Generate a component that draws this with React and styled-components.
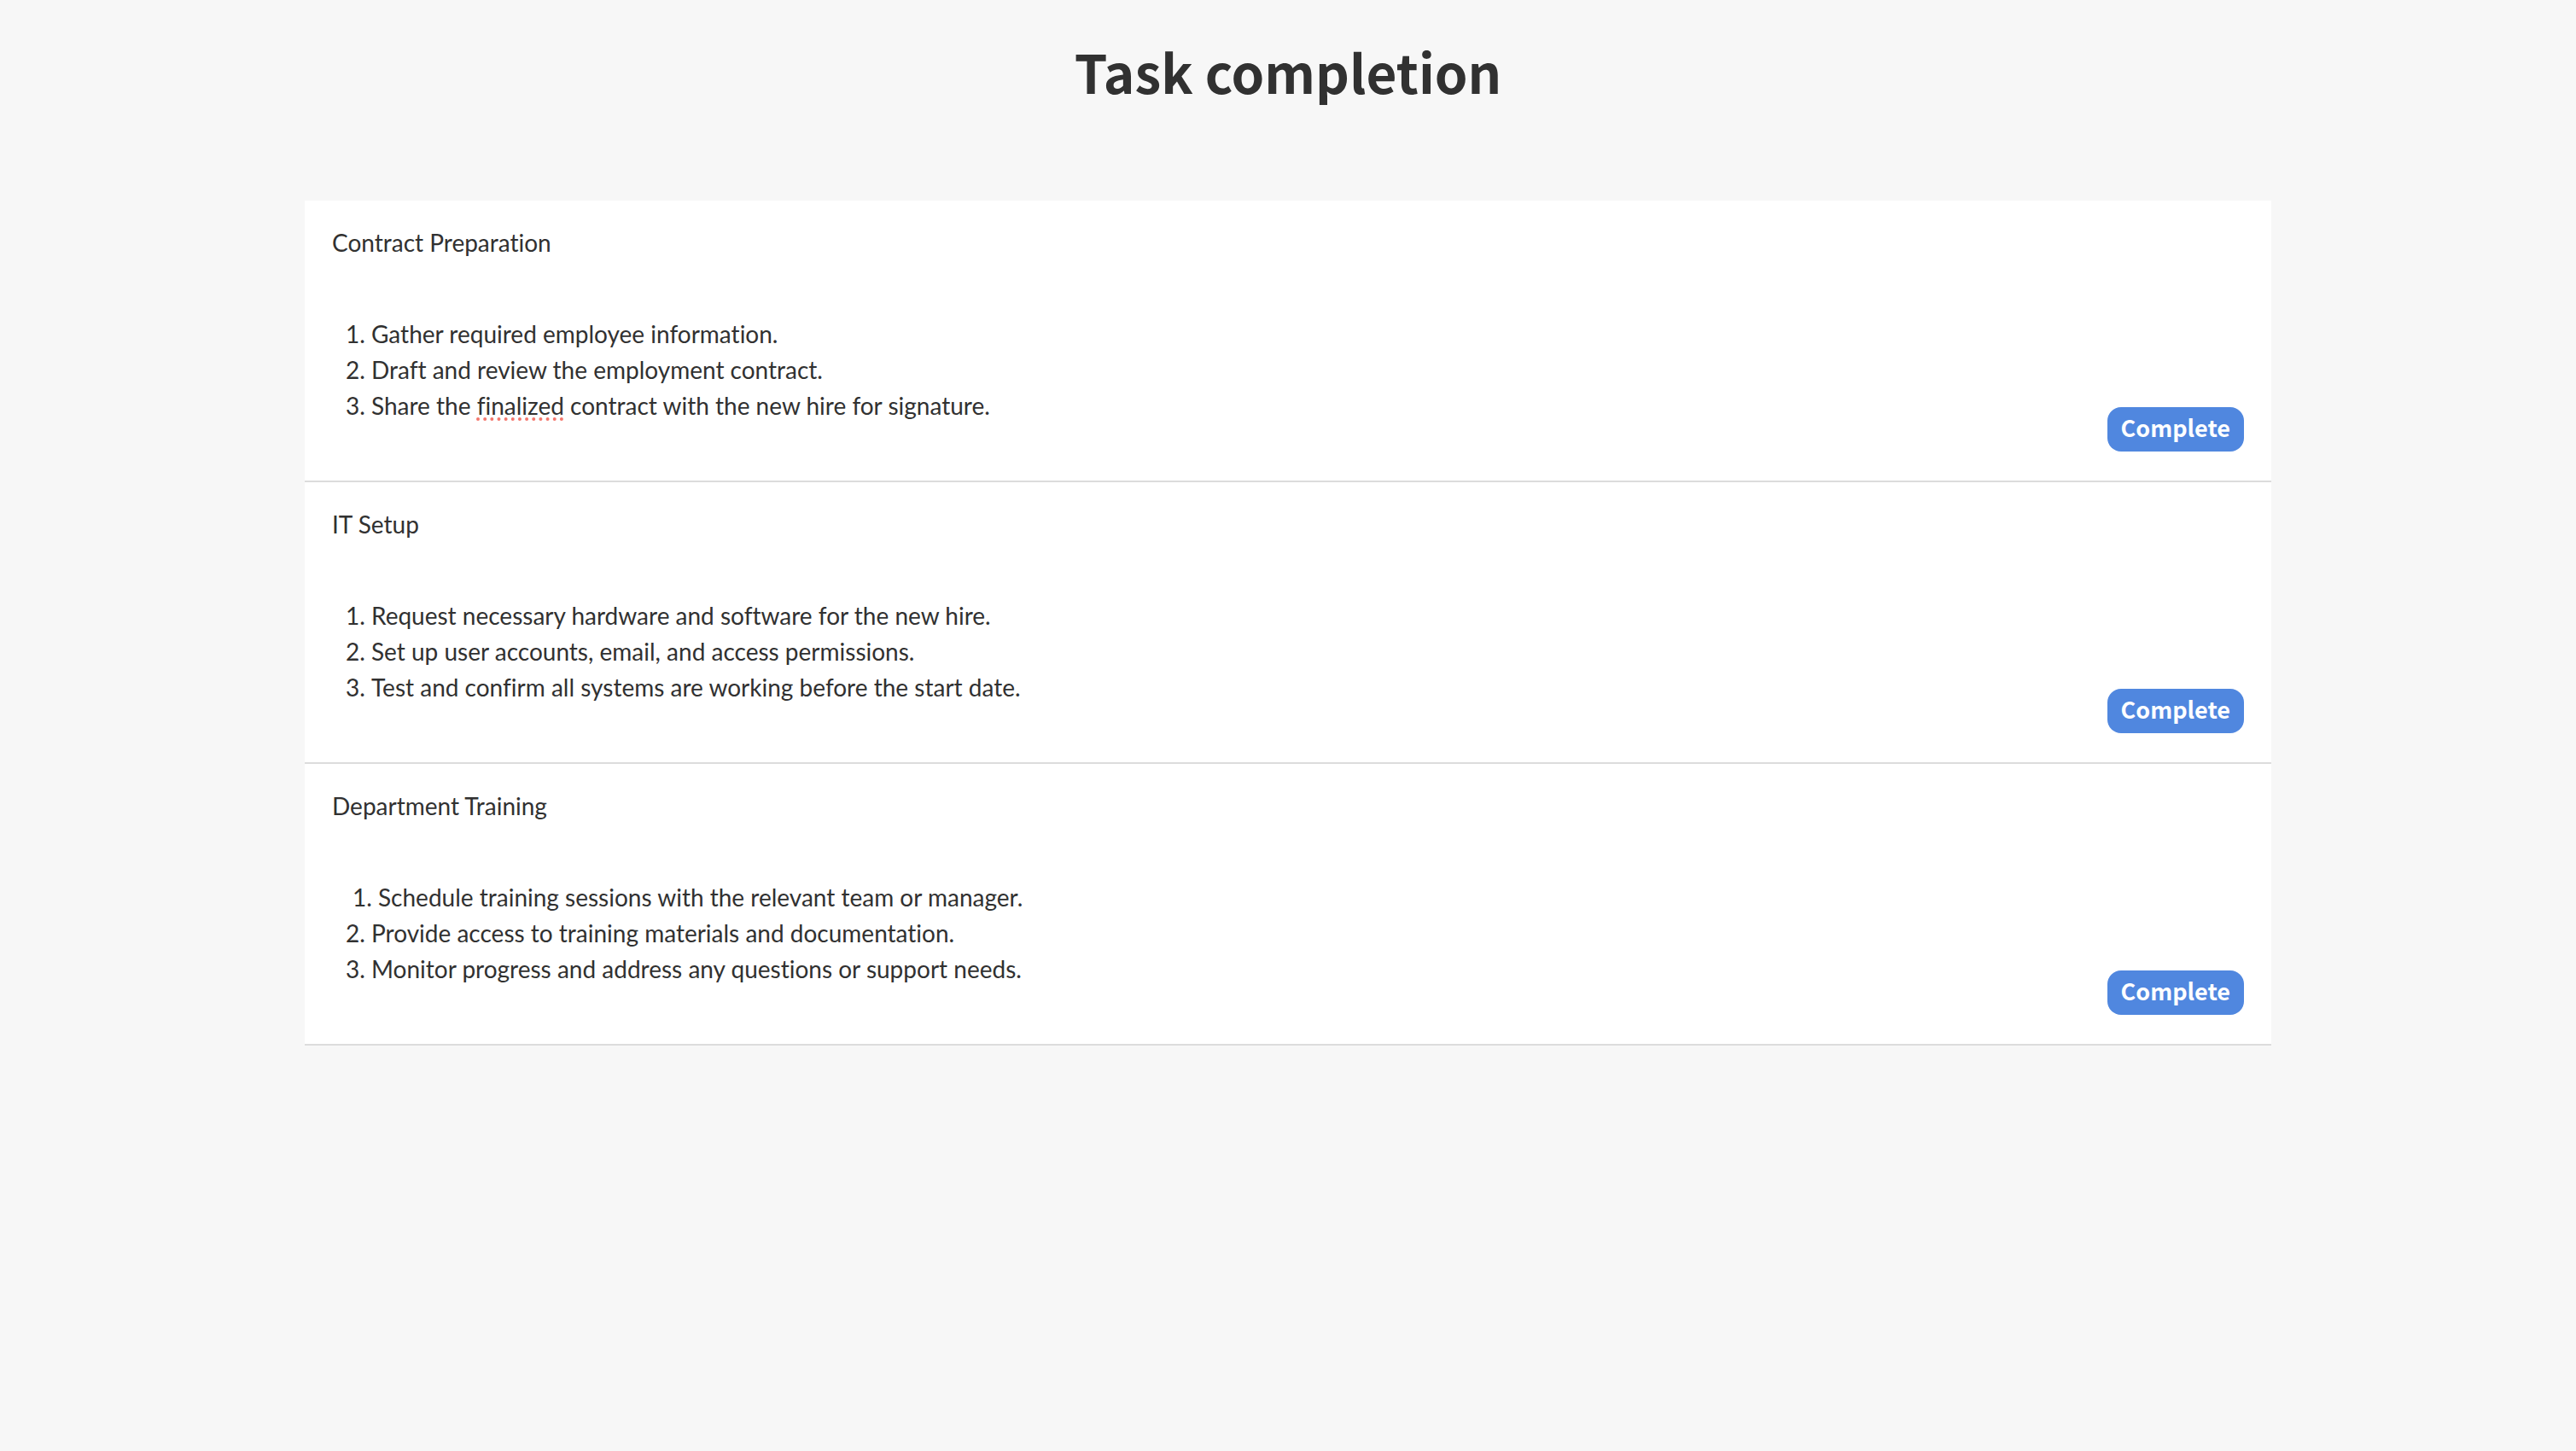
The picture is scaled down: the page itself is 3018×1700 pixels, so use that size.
import React from 'react';
import styled, { createGlobalStyle } from 'styled-components';

const displayFont = "'Noto Sans CJK SC', 'Open Sans', sans-serif";

const GlobalStyle = createGlobalStyle`
  *, *::before, *::after {
    box-sizing: border-box;
  }

  body {
    margin: 0;
    min-height: 100vh;
    background: #f7f7f7;
    color: #313131;
    font-family: Lato, 'Open Sans', sans-serif;
    font-size: 28px;
    line-height: 42px;
    font-variant-ligatures: none;
  }
`;

const Page = styled.main`
  display: flex;
  flex-direction: column;
  align-items: center;
  gap: 114px;
  padding: 45px 32px;
`;

const PageTitle = styled.h1`
  margin: 0;
  font-family: ${displayFont};
  font-size: 62px;
  font-weight: 700;
  line-height: 76px;
  text-align: center;
`;

const TaskList = styled.div`
  width: 100%;
  max-width: 2304px;
`;

const TaskCard = styled.section`
  display: flex;
  align-items: flex-end;
  justify-content: space-between;
  gap: 32px;
  padding: 28px 32px 34px;
  background: #ffffff;
  border-bottom: 2px solid #dcdcdc;
`;

const TaskBody = styled.div`
  display: flex;
  flex-direction: column;
  gap: 65px;
  padding-bottom: 33px;
`;

const TaskTitle = styled.h2`
  margin: 0;
  font-size: 28px;
  font-weight: 400;
  line-height: 42px;
`;

const Steps = styled.ol`
  margin: 0;
  padding: 0 0 0 16px;
  list-style: none;
`;

const Step = styled.li`
  display: flex;
  padding-left: ${({ $indented }) => ($indented ? '8px' : '0')};
`;

const StepNumber = styled.span`
  flex: 0 0 30px;
`;

const Misspelled = styled.span`
  text-decoration: underline dotted #f4776d 4px;
  text-decoration-skip-ink: none;
  text-underline-offset: 3px;
`;

const CompleteButton = styled.button`
  flex: none;
  height: 52px;
  padding: 0 16px 4px;
  border: 0;
  border-radius: 16px;
  background: #5087df;
  color: #ffffff;
  font-family: ${displayFont};
  font-size: 27px;
  font-weight: 700;
  line-height: 48px;
  cursor: pointer;
`;

const tasks = [
  {
    title: 'Contract Preparation',
    steps: [
      { text: 'Gather required employee information.' },
      { text: 'Draft and review the employment contract.' },
      {
        text: (
          <>
            Share the <Misspelled>finalized</Misspelled> contract with the new hire for signature.
          </>
        ),
      },
    ],
  },
  {
    title: 'IT Setup',
    steps: [
      { text: 'Request necessary hardware and software for the new hire.' },
      { text: 'Set up user accounts, email, and access permissions.' },
      { text: 'Test and confirm all systems are working before the start date.' },
    ],
  },
  {
    title: 'Department Training',
    steps: [
      { text: 'Schedule training sessions with the relevant team or manager.', indented: true },
      { text: 'Provide access to training materials and documentation.' },
      { text: 'Monitor progress and address any questions or support needs.' },
    ],
  },
];

export default function App() {
  return (
    <>
      <GlobalStyle />
      <Page>
        <PageTitle>Task completion</PageTitle>
        <TaskList>
          {tasks.map(({ title, steps }) => (
            <TaskCard key={title}>
              <TaskBody>
                <TaskTitle>{title}</TaskTitle>
                <Steps>
                  {steps.map(({ text, indented }, index) => (
                    <Step key={index} $indented={indented}>
                      <StepNumber>{index + 1}.</StepNumber>
                      <span>{text}</span>
                    </Step>
                  ))}
                </Steps>
              </TaskBody>
              <CompleteButton type="button">Complete</CompleteButton>
            </TaskCard>
          ))}
        </TaskList>
      </Page>
    </>
  );
}
